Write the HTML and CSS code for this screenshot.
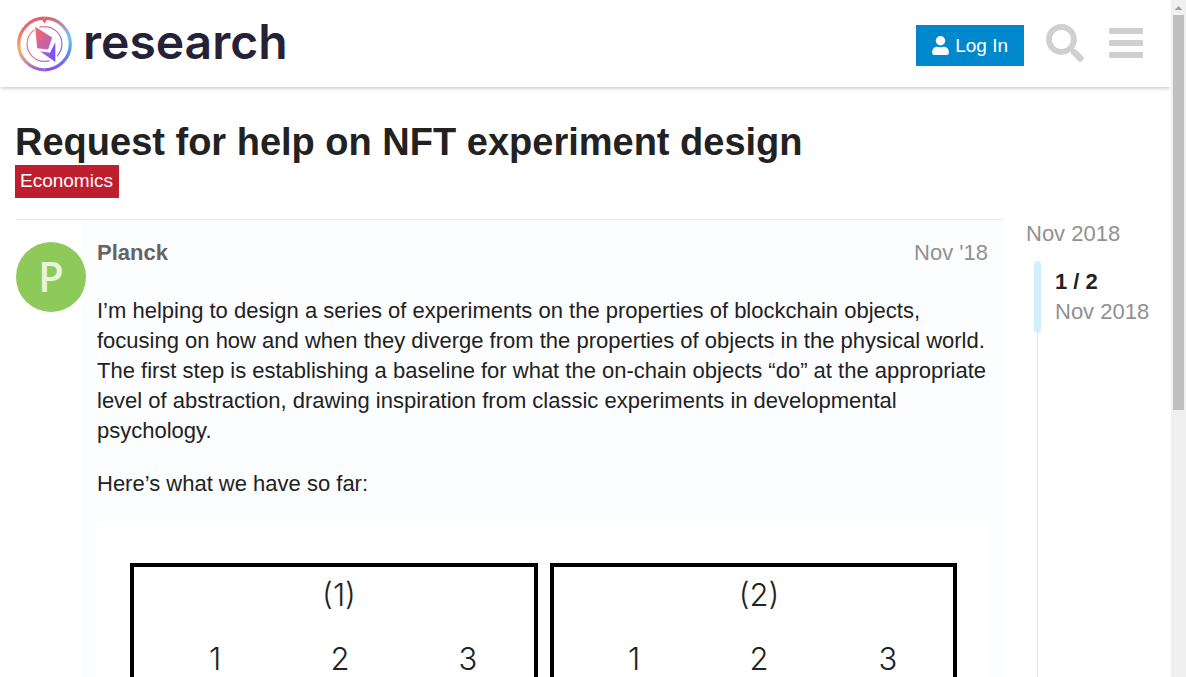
FILE: index.html
```html
<!DOCTYPE html>
<html lang="en">
<head>
<meta charset="utf-8">
<meta name="viewport" content="width=device-width, initial-scale=1">
<title>Request for help on NFT experiment design</title>
<link rel="stylesheet" href="styles.css">
</head>
<body>
<div class="window">
  <div class="page">
    <header class="site-header">
      <a class="brand" href="#">
        <svg class="brand-mark" viewBox="0 0 56 56" aria-hidden="true">
          <defs>
            <linearGradient id="ring-warm" x1="0" y1="0" x2="0" y2="1">
              <stop offset="0" stop-color="#e2606c"/>
              <stop offset="0.3" stop-color="#f57462"/>
              <stop offset="0.62" stop-color="#f0b264"/>
              <stop offset="0.84" stop-color="#d58ba0"/>
              <stop offset="1" stop-color="#9a5fd8"/>
            </linearGradient>
            <linearGradient id="ring-cool" x1="0" y1="0" x2="0" y2="1">
              <stop offset="0" stop-color="#e2646f"/>
              <stop offset="0.2" stop-color="#9aa5cc"/>
              <stop offset="0.38" stop-color="#6cc4f2"/>
              <stop offset="0.65" stop-color="#5591f6"/>
              <stop offset="1" stop-color="#8b50e8"/>
            </linearGradient>
            <linearGradient id="thin-ring" x1="0" y1="0" x2="1" y2="0.5">
              <stop offset="0" stop-color="#f27a62"/>
              <stop offset="0.5" stop-color="#cb78a5"/>
              <stop offset="1" stop-color="#7374f2"/>
            </linearGradient>
            <linearGradient id="gem-top" x1="0" y1="0" x2="1" y2="1">
              <stop offset="0.2" stop-color="#ed6573"/>
              <stop offset="1" stop-color="#a863cf"/>
            </linearGradient>
            <linearGradient id="gem-low" x1="0" y1="0" x2="1" y2="0">
              <stop offset="0" stop-color="#b15fcb"/>
              <stop offset="1" stop-color="#7352fb"/>
            </linearGradient>
          </defs>
          <path d="M28 2.200A25.800 25.800 0 0 0 28 53.800" fill="none" stroke="url(#ring-warm)" stroke-width="3.200"/>
          <path d="M28 2.200A25.800 25.800 0 0 1 28 53.800" fill="none" stroke="url(#ring-cool)" stroke-width="3.200"/>
          <path d="M25 3h6L28 7.600z" fill="#dc6470"/>
          <circle cx="28" cy="28" r="17.400" fill="none" stroke="url(#thin-ring)" stroke-width="1.200"/>
          <path d="M17.500 8.500L21 10L37 21L40.500 25V47.500H38L22 38L19 33z" fill="#fff"/>
          <path d="M18.700 10.700L35.700 21.600L31.600 33.600L20.700 32.300z" fill="url(#gem-top)"/>
          <path d="M23.500 35.200L33.500 36.700L38.800 26.300V46z" fill="url(#gem-low)"/>
        </svg>
        <span class="brand-name">research</span>
      </a>
      <nav class="header-actions" aria-label="Site">
        <button class="login" type="button">
          <svg class="login-icon" viewBox="0 0 448 512" aria-hidden="true"><path fill="currentColor" d="M224 256a128 128 0 1 0 0-256 128 128 0 0 0 0 256zm90 32h-17a174 174 0 0 1-146 0h-17A134 134 0 0 0 0 422v42a48 48 0 0 0 48 48h352a48 48 0 0 0 48-48v-42a134 134 0 0 0-134-134z"/></svg>
          <span>Log In</span>
        </button>
        <button class="icon-button" type="button" aria-label="Search">
          <svg class="search-icon" viewBox="0 0 512 512" aria-hidden="true"><path fill="currentColor" d="M505 442.700L405.300 343c-4.500-4.500-10.600-7-17-7H372c27.600-35.300 44-79.700 44-128C416 93.100 322.900 0 208 0S0 93.100 0 208s93.100 208 208 208c48.300 0 92.700-16.400 128-44v16.300c0 6.400 2.500 12.500 7 17l99.700 99.700c9.400 9.400 24.600 9.400 33.900 0l28.300-28.300c9.400-9.400 9.400-24.600.1-34zM208 336c-70.700 0-128-57.200-128-128 0-70.700 57.200-128 128-128 70.700 0 128 57.200 128 128 0 70.700-57.200 128-128 128z"/></svg>
        </button>
        <button class="icon-button" type="button" aria-label="Menu">
          <svg class="menu-icon" viewBox="0 0 34 38" aria-hidden="true"><g fill="currentColor"><rect y="4" width="34" height="6" rx="1"/><rect y="16" width="34" height="6" rx="1"/><rect y="28" width="34" height="6" rx="1"/></g></svg>
        </button>
      </nav>
    </header>

    <main class="topic">
      <h1 class="topic-title">Request for help on NFT experiment design</h1>
      <a class="category" href="#">Economics</a>

      <div class="topic-columns">
        <article class="post">
          <div class="avatar" aria-hidden="true">P</div>
          <div class="post-content">
            <div class="post-meta">
              <a class="author" href="#">Planck</a>
              <a class="post-date" href="#">Nov '18</a>
            </div>
            <p>I’m helping to design a series of experiments on the properties of blockchain objects, focusing on how and when they diverge from the properties of objects in the physical world. The first step is establishing a baseline for what the on-chain objects “do” at the appropriate level of abstraction, drawing inspiration from classic experiments in developmental psychology.</p>
            <p>Here’s what we have so far:</p>
            <svg class="diagram" viewBox="0 0 891 400" role="img" aria-label="Experiment panels 1 and 2">
              <rect width="891" height="400" fill="#fff"/>
              <g fill="none" stroke="#000" stroke-width="4">
                <rect x="35" y="43" width="404" height="340"/>
                <rect x="455" y="43" width="403" height="340"/>
              </g>
              <g class="diagram-label">
                <text x="242" y="84">(1)</text>
                <text x="118" y="148">1</text>
                <text x="243" y="148">2</text>
                <text x="371" y="148">3</text>
                <text x="662" y="84">(2)</text>
                <text x="537" y="148">1</text>
                <text x="662" y="148">2</text>
                <text x="791" y="148">3</text>
              </g>
            </svg>
          </div>
        </article>

        <aside class="timeline" aria-label="Topic timeline">
          <a class="timeline-start" href="#">Nov 2018</a>
          <div class="timeline-track">
            <div class="timeline-position">
              <span class="timeline-handle"></span>
              <div class="timeline-text">
                <strong>1 / 2</strong>
                <span>Nov 2018</span>
              </div>
            </div>
          </div>
        </aside>
      </div>
    </main>
  </div>
  <div class="scrollbar" aria-hidden="true">
    <svg class="scroll-arrow" viewBox="0 0 15 15"><path d="M3.500 10L7.500 6L11.500 10z" fill="#a0a0a0"/></svg>
    <div class="scroll-thumb"></div>
  </div>
</div>
</body>
</html>
```
FILE: styles.css
```css
* {
  box-sizing: border-box;
}

body {
  margin: 0;
  background: #fff;
  color: #222;
  font-family: "Liberation Sans", Arial, sans-serif;
  font-size: 22px;
  line-height: 30px;
}

a {
  color: inherit;
  text-decoration: none;
}

button {
  border: 0;
  padding: 0;
  background: none;
  font: inherit;
  cursor: pointer;
}

.window {
  display: flex;
  height: 100vh;
  overflow: hidden;
}

.page {
  flex: 1;
  min-width: 0;
  display: flex;
  flex-direction: column;
}

.site-header {
  flex: none;
  display: flex;
  align-items: center;
  justify-content: space-between;
  padding: 16px 28px 15px 16px;
  box-shadow: 0 2px 4px -1px rgba(0, 0, 0, 0.25);
}

.brand {
  display: flex;
  align-items: center;
  gap: 10px;
}

.brand-mark {
  width: 57px;
  height: 56px;
}

.brand-name {
  color: #252136;
  font-family: Inter, sans-serif;
  font-size: 48px;
  font-weight: 600;
  line-height: 52px;
  padding-bottom: 4px;
}

.header-actions {
  display: flex;
  align-items: center;
  gap: 22px;
  padding-bottom: 2px;
}

.login {
  display: flex;
  align-items: center;
  gap: 6px;
  margin-top: 4px;
  padding: 6px 16px 5px;
  background: #0088cc;
  color: #fff;
  font-size: 19px;
}

.login-icon {
  width: 17px;
  height: 19px;
}

.icon-button {
  display: flex;
  color: #d0d0d0;
}

.search-icon {
  width: 38px;
  height: 38px;
}

.menu-icon {
  width: 34px;
  height: 38px;
  margin-left: 3px;
}

.topic {
  flex: 1;
  min-height: 0;
  display: flex;
  flex-direction: column;
  align-items: flex-start;
  padding: 33px 16px 0 15px;
}

.topic-title {
  margin: 0;
  font-size: 38px;
  font-weight: 700;
  line-height: 45px;
}

.category {
  padding: 1px 6px 2px 5px;
  background: #bf1e2e;
  color: #fff;
  font-size: 19px;
}

.topic-columns {
  flex: 1;
  min-height: 0;
  display: flex;
  gap: 22px;
  width: 100%;
  padding: 21px 0 0 1px;
}

.post {
  flex: 1;
  min-width: 0;
  display: flex;
  border-top: 1px solid #e9e9e9;
}

.avatar {
  flex: none;
  width: 70px;
  height: 70px;
  margin: 22px -5px 0 0;
  border-radius: 50%;
  background: #8dca59;
  color: #e8f4dd;
  font-family: "Open Sans", sans-serif;
  font-size: 42px;
  font-weight: 600;
  line-height: 68px;
  text-align: center;
  z-index: 1;
}

.post-content {
  flex: 1;
  min-width: 0;
  min-height: 100%;
  padding: 18px 16px 0;
  background: #fcfdff;
}

.post-meta {
  display: flex;
  justify-content: space-between;
  margin-bottom: 28px;
}

.author {
  color: #646464;
  font-weight: 700;
}

.post-date {
  color: #919191;
}

.post p {
  margin: 0 0 23px;
}

.diagram {
  display: block;
  width: 100%;
}

.diagram-label {
  fill: #222;
  font-family: Inter, sans-serif;
  font-size: 31px;
  font-weight: 300;
  text-anchor: middle;
}

.timeline {
  flex: none;
  width: 129px;
  display: flex;
  flex-direction: column;
  color: #919191;
}

.timeline-start {
  margin-bottom: 12px;
}

.timeline-track {
  flex: 1;
  margin-left: 11px;
  border-left: 1px solid #d1ebee;
}

.timeline-position {
  display: flex;
  align-items: center;
  gap: 14px;
  height: 72px;
  margin-left: -4px;
}

.timeline-handle {
  flex: none;
  width: 7px;
  height: 100%;
  border-radius: 4px;
  background: #d1f0ff;
}

.timeline-text {
  display: flex;
  flex-direction: column;
  white-space: nowrap;
}

.timeline-text strong {
  color: #222;
}

.scrollbar {
  flex: none;
  width: 15px;
  padding: 0 2px;
  background: #f0f0f0;
}

.scroll-arrow {
  display: block;
  width: 15px;
  height: 15px;
  margin-left: -2px;
}

.scroll-thumb {
  height: 58.4vh;
  background: #c0c0c0;
}
```
